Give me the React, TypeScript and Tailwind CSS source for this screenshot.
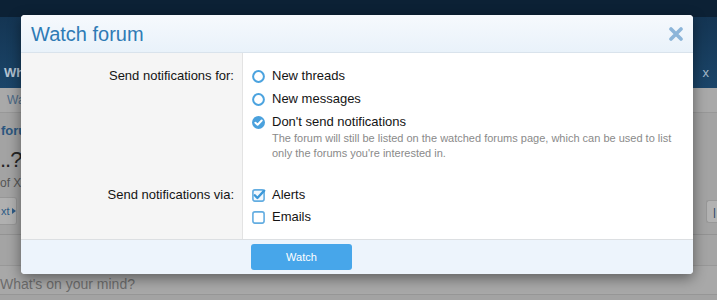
import React from "react";

function RadioOff() {
  return (
    <svg width="13" height="13" viewBox="0 0 13 13" className="shrink-0">
      <circle cx="6.5" cy="6.5" r="5.4" fill="#fff" stroke="#4ba3df" strokeWidth="2" />
    </svg>
  );
}
function RadioOn() {
  return (
    <svg width="13" height="13" viewBox="0 0 13 13" className="shrink-0">
      <circle cx="6.5" cy="6.5" r="6.5" fill="#4aa1dd" />
      <path d="M3.4 6.7 L5.6 8.8 L9.7 4.5" fill="none" stroke="#fff" strokeWidth="2" strokeLinecap="round" strokeLinejoin="round" />
    </svg>
  );
}
function BoxOff() {
  return (
    <svg width="13" height="13" viewBox="0 0 13 13" className="shrink-0">
      <rect x="0.9" y="0.9" width="11.2" height="11.2" rx="2" fill="#fff" stroke="#63ade1" strokeWidth="1.6" />
    </svg>
  );
}
function BoxOn() {
  return (
    <svg width="13" height="13" viewBox="0 0 13 13" className="shrink-0 overflow-visible">
      <rect x="0.9" y="0.9" width="11.2" height="11.2" rx="2" fill="#f3f8fd" stroke="#63ade1" strokeWidth="1.6" />
      <path d="M2.8 6.3 L5.4 9 L12.2 1.6" fill="none" stroke="#3d98d8" strokeWidth="2.3" strokeLinecap="round" strokeLinejoin="round" />
    </svg>
  );
}

function Option({ icon, label }: { icon: React.ReactNode; label: string }) {
  return (
    <div className="flex items-center h-[18px]">
      <div className="w-[20px] flex items-center">{icon}</div>
      <span className="text-[13px] text-[#141414] leading-[18px]">{label}</span>
    </div>
  );
}

export default function App() {
  return (
    <div className="relative w-[717px] h-[300px] overflow-hidden bg-[#a3a3a3] font-['Liberation_Sans',Arial,sans-serif]">
      {/* background page */}
      <div className="h-[17px] bg-[#0c2135]" />
      <div className="h-[71px] bg-gradient-to-b from-[#143553] to-[#1b4569] flex items-end justify-between pb-[6px]">
        <span className="text-[13px] font-bold text-[#b4c3d2] leading-[18px] pl-[4px]">What's new</span>
        <span className="text-[13px] text-[#a6b9ca] leading-[18px] pr-[8px]">x</span>
      </div>
      <div className="h-[25px] bg-[#a9a9a9] border-b border-[#989898] flex items-center pl-[7px]">
        <span className="text-[12px] text-[#4d6b88]">Watched</span>
      </div>
      <div className="h-[121px] flex justify-between">
        <div className="flex flex-col pt-[9px]">
          <span className="text-[13px] font-bold text-[#2b5780] leading-[18px] pl-[1px]">forum</span>
          <span className="text-[22px] text-[#262626] leading-[28px] mt-[6px] tracking-[-1px]">..?</span>
          <span className="text-[12px] text-[#555] leading-[16px] mt-[1px]">of XenForo</span>
          <div className="mt-[6px] h-[28px] w-[17px] bg-[#b0b0b0] border border-l-0 border-[#979797] rounded-r-[3px] flex items-center gap-[2px] pl-[1px]">
            <span className="text-[11px] text-[#2d5a85] leading-[14px]">xt</span>
            <svg width="4" height="6" viewBox="0 0 4 6"><path d="M0 0 L4 3 L0 6 Z" fill="#2d5a85" /></svg>
          </div>
        </div>
        <div className="pt-[87px]">
          <div className="h-[23px] w-[11px] bg-[#b2b2b2] border border-r-0 border-[#989898] rounded-l-[3px] flex items-center pl-[6px]">
            <span className="text-[11px] text-[#1e3e5e] leading-[14px]">|</span>
          </div>
        </div>
      </div>
      <div className="h-[31px] border-t border-[#939393] bg-[#a4a4a4]" />
      <div className="h-[29px] border-t border-[#989898] bg-[#a8a8a8] flex items-end">
        <span className="text-[14px] text-[#6c6c6c] leading-[20px]">What's on your mind?</span>
      </div>
      <div className="border-t border-[#969696]" />

      {/* modal */}
      <div className="absolute left-[21px] top-[15px] w-[672px] rounded-[4px] overflow-hidden bg-white shadow-[0_4px_14px_rgba(0,0,0,0.45)]">
        <div className="h-[38px] bg-gradient-to-b from-[#f6f9fd] to-[#e9f2fa] border-b border-[#d9e3ec] flex items-center justify-between pl-[10px] pr-[10px]">
          <span className="text-[20px] leading-[38px] text-[#2f7bb5]">Watch forum</span>
          <svg width="14" height="14" viewBox="0 0 14 14" className="mt-[1px]">
            <path d="M2 2 L12 12 M12 2 L2 12" stroke="#8cb5d9" strokeWidth="3.6" strokeLinecap="round" />
          </svg>
        </div>
        <div className="grid grid-cols-[222px_1fr] border-b border-[#dcdfe2]">
          <div className="bg-[#f5f5f5] border-r border-[#e3e3e3] flex flex-col items-end pr-[8px] pt-[14px] pb-[13px]">
            <div className="h-[18px] text-[13px] leading-[18px] text-[#141414]">Send notifications for:</div>
            <div className="h-[101px]" />
            <div className="h-[18px] text-[13px] leading-[18px] text-[#141414]">Send notifications via:</div>
          </div>
          <div className="pl-[9px] pr-[10px] pt-[14px] pb-[13px] flex flex-col">
            <div className="flex flex-col gap-[5px]">
              <Option icon={<RadioOff />} label="New threads" />
              <Option icon={<RadioOff />} label="New messages" />
              <Option icon={<RadioOn />} label="Don't send notifications" />
            </div>
            <div className="pl-[20px] text-[11px] leading-[15px] text-[#8a8a8a]">
              The forum will still be listed on the watched forums page, which can be used to list only the forums you're interested in.
            </div>
            <div className="flex flex-col gap-[4px] mt-[25px]">
              <Option icon={<BoxOn />} label="Alerts" />
              <Option icon={<BoxOff />} label="Emails" />
            </div>
          </div>
        </div>
        <div className="h-[34px] bg-[#edf4fc] flex items-center pl-[230px]">
          <button className="w-[101px] h-[26px] rounded-[3px] bg-[#47a6ea] text-white text-[11px] leading-[26px]">
            Watch
          </button>
        </div>
      </div>
    </div>
  );
}
